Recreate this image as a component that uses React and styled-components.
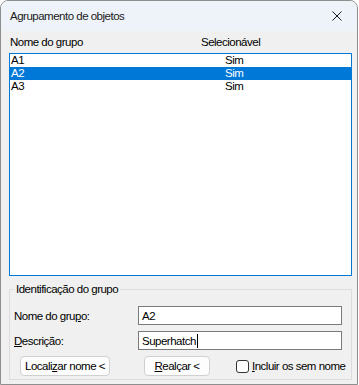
import React from "react";
import styled, { createGlobalStyle } from "styled-components";

const GlobalStyle = createGlobalStyle`
    html, body {
        margin: 0;
        padding: 0;
        background: #ffffff;
    }

    * {
        box-sizing: border-box;
    }
`;

const groups = [
    { name: "A1", selectable: "Sim" },
    { name: "A2", selectable: "Sim" },
    { name: "A3", selectable: "Sim" },
];

function CloseIcon() {
    return (
        <svg width="10" height="10" viewBox="0 0 10 10">
            <path d="M0.5 0.5 L9.5 9.5 M9.5 0.5 L0.5 9.5" stroke="#1b1b1b" strokeWidth="1" />
        </svg>
    );
}

function App() {
    const selected = "A2";

    return (
        <>
            <GlobalStyle />
            <StyledWindow>
                <StyledTitleBar>
                    <span>Agrupamento de objetos</span>
                    <StyledClose>
                        <CloseIcon />
                    </StyledClose>
                </StyledTitleBar>

                <StyledBody>
                    <StyledHeader>
                        <span>
                            Nome do <u>g</u>rupo
                        </span>
                        <span>Selecionável</span>
                    </StyledHeader>

                    <StyledList>
                        {groups.map((g) => (
                            <StyledRow key={g.name} $active={g.name === selected}>
                                <span>{g.name}</span>
                                <span>{g.selectable}</span>
                            </StyledRow>
                        ))}
                    </StyledList>

                    <StyledGroupBox>
                        <legend>Identificação do grupo</legend>

                        <StyledForm>
                            <label>
                                Nome do gru<u>p</u>o:
                            </label>
                            <StyledInput>
                                <span>A2</span>
                            </StyledInput>

                            <label>
                                <u>D</u>escrição:
                            </label>
                            <StyledInput>
                                <span>Superhatch</span>
                                <StyledCaret />
                            </StyledInput>
                        </StyledForm>

                        <StyledActions>
                            <StyledButton $width={90}>
                                <span>
                                    Locali<u>z</u>ar nome &lt;
                                </span>
                            </StyledButton>
                            <StyledButton $width={66} $offset={34}>
                                <span>
                                    <u>R</u>ealçar &lt;
                                </span>
                            </StyledButton>
                            <StyledCheck>
                                <StyledBox />
                                <span>
                                    <u>I</u>ncluir os sem nome
                                </span>
                            </StyledCheck>
                        </StyledActions>
                    </StyledGroupBox>
                </StyledBody>
            </StyledWindow>
        </>
    );
}

export default App;

const StyledWindow = styled.div`
    display: flex;
    flex-direction: column;
    width: 358px;
    height: 385px;
    border: 1px solid #8e8e8e;
    border-radius: 8px 8px 0 0;
    background: #f0f0f0;
    font-family: "Segoe UI", "Liberation Sans", Arial, sans-serif;
    font-size: 11.5px;
    letter-spacing: -0.5px;
    color: #000;
    overflow: hidden;
    white-space: nowrap;

    u {
        text-decoration: underline;
        text-underline-offset: 1px;
    }
`;

const StyledTitleBar = styled.div`
    display: flex;
    align-items: center;
    justify-content: space-between;
    height: 30px;
    padding: 0 9px 0 9px;
    background: #eef3f9;
    font-size: 11.5px;
    color: #1a1a1a;
`;

const StyledClose = styled.div`
    display: flex;
    align-items: center;
    justify-content: center;
    width: 20px;
    height: 20px;
    margin-right: 1px;
`;

const StyledBody = styled.div`
    display: flex;
    flex-direction: column;
    padding: 0 5px 0 8px;
`;

const StyledHeader = styled.div`
    display: grid;
    grid-template-columns: 191px 1fr;
    align-items: center;
    height: 22px;
    padding-left: 1px;
`;

const StyledList = styled.div`
    display: flex;
    flex-direction: column;
    height: 223px;
    border: 1px solid #0078d7;
    background: #ffffff;
`;

const StyledRow = styled.div`
    display: grid;
    grid-template-columns: 214px 1fr;
    height: 13px;
    line-height: 13px;
    padding-left: 1px;
    background: ${(p) => (p.$active ? "#0078d7" : "transparent")};
    color: ${(p) => (p.$active ? "#ffffff" : "#000")};
`;

const StyledGroupBox = styled.fieldset`
    height: 98px;
    margin: 6px 0 0 0;
    padding: 9px 0 0 4px;
    border: 1px solid #dcdcdc;
    min-width: 0;

    legend {
        margin-left: 0;
        padding: 0 2px;
        line-height: 15px;
    }
`;

const StyledForm = styled.div`
    display: grid;
    grid-template-columns: 124px 204px;
    grid-auto-rows: 19px;
    row-gap: 6px;
    align-items: center;
`;

const StyledInput = styled.div`
    display: flex;
    align-items: center;
    height: 19px;
    padding-left: 3px;
    border: 1px solid #7a7a7a;
    background: #ffffff;
`;

const StyledCaret = styled.span`
    display: inline-block;
    width: 1px;
    height: 14px;
    margin-left: 1px;
    background: #000;
`;

const StyledActions = styled.div`
    display: flex;
    align-items: center;
    margin-top: 6px;
    padding-left: 6px;
`;

const StyledButton = styled.div`
    display: flex;
    align-items: center;
    justify-content: center;
    width: ${(p) => p.$width}px;
    height: 20px;
    margin-left: ${(p) => p.$offset || 0}px;
    border: 1px solid #d0d0d0;
    border-radius: 4px;
    background: #fdfdfd;
`;

const StyledCheck = styled.div`
    display: flex;
    align-items: center;
    gap: 3px;
    margin-left: 26px;
`;

const StyledBox = styled.span`
    display: inline-block;
    width: 13px;
    height: 13px;
    border: 1px solid #333333;
    border-radius: 3px;
    background: #ffffff;
`;
